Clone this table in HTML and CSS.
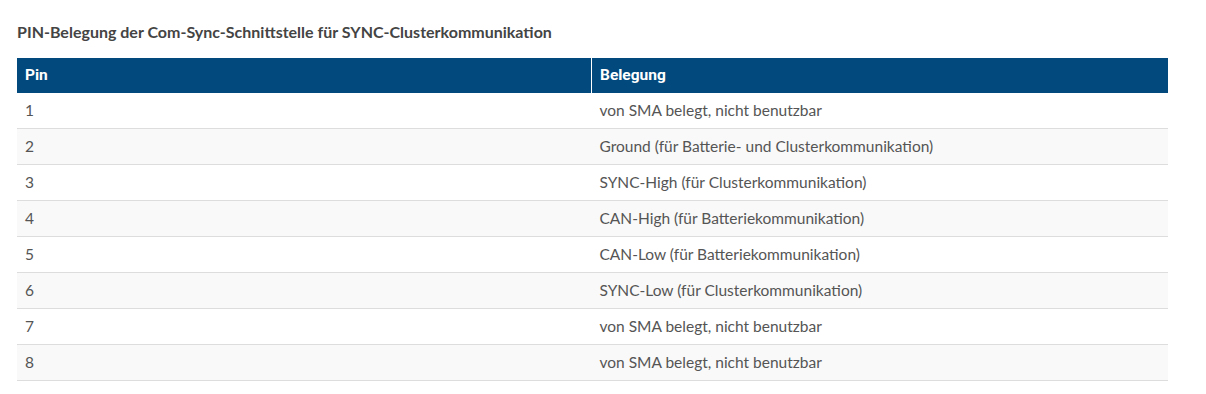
FILE: index.html
```html
<!DOCTYPE html>
<html lang="de">
<head>
<meta charset="utf-8">
<link rel="stylesheet" href="styles.css">
</head>
<body>
<div class="wrap">
  <h4 class="title">PIN-Belegung der Com-Sync-Schnittstelle für SYNC-Clusterkommunikation</h4>
  <table class="pins">
    <thead>
      <tr><th class="c1">Pin</th><th class="c2">Belegung</th></tr>
    </thead>
    <tbody>
      <tr><td>1</td><td>von SMA belegt, nicht benutzbar</td></tr>
      <tr><td>2</td><td>Ground (für Batterie- und Clusterkommunikation)</td></tr>
      <tr><td>3</td><td>SYNC-High (für Clusterkommunikation)</td></tr>
      <tr><td>4</td><td>CAN-High (für Batteriekommunikation)</td></tr>
      <tr><td>5</td><td>CAN-Low (für Batteriekommunikation)</td></tr>
      <tr><td>6</td><td>SYNC-Low (für Clusterkommunikation)</td></tr>
      <tr><td>7</td><td>von SMA belegt, nicht benutzbar</td></tr>
      <tr><td>8</td><td>von SMA belegt, nicht benutzbar</td></tr>
    </tbody>
  </table>
</div>
</body>
</html>
```

FILE: styles.css
```css
html, body {
  margin: 0;
  padding: 0;
  background: #ffffff;
}
.wrap {
  padding: 22px 0 0 17px;
  width: 1151px;
}
.title {
  margin: 0 0 16px 0;
  font-family: "Lato", "Liberation Sans", sans-serif;
  font-weight: 700;
  font-size: 16px;
  line-height: 20px;
  color: #444444;
}
.pins {
  width: 1151px;
  border-collapse: collapse;
  table-layout: fixed;
  font-family: "Lato", "Liberation Sans", sans-serif;
}
.pins th {
  background: #02497e;
  color: #ffffff;
  font-family: "Roboto", "Liberation Sans", sans-serif;
  font-weight: 700;
  font-size: 15.5px;
  text-align: left;
  padding: 8px 8px;
  line-height: 19px;
}
.pins th.c1 {
  width: 558px;
  border-right: 1px solid #ffffff;
}
.pins td {
  padding: 8px 8px;
  line-height: 19px;
  font-size: 15.5px;
  color: #555555;
  border-bottom: 1px solid #dddddd;
}
.pins tbody tr:nth-child(even) td {
  background: #f9f9f9;
}
```
